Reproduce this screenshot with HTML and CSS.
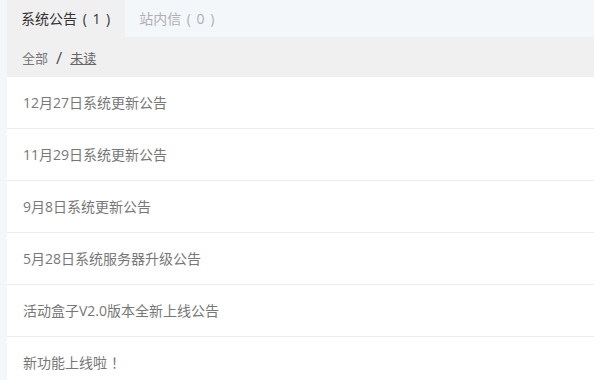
FILE: index.html
```html
<!DOCTYPE html>
<html lang="zh">
<head>
<meta charset="utf-8">
<link rel="stylesheet" href="styles.css">
</head>
<body>
<div class="panel">
  <div class="tabs">
    <div class="tab active">系统公告 ( 1 )</div>
    <div class="tab">站内信 ( 0 )</div>
  </div>
  <div class="filter">
    <span class="f-item">全部</span>
    <span class="sep">/</span>
    <span class="f-item current">未读</span>
  </div>
  <ul class="list">
    <li class="row">12月27日系统更新公告</li>
    <li class="row">11月29日系统更新公告</li>
    <li class="row">9月8日系统更新公告</li>
    <li class="row">5月28日系统服务器升级公告</li>
    <li class="row">活动盒子V2.0版本全新上线公告</li>
    <li class="row">新功能上线啦<span class="bang">！</span></li>
  </ul>
</div>
</body>
</html>
```
FILE: styles.css
```css
html, body {
  margin: 0;
  padding: 0;
}
body {
  background: #f3f7fa;
  font-family: "Open Sans", "Noto Sans CJK SC", sans-serif;
  height: 380px;
  overflow: hidden;
}
.panel {
  margin-left: 7px;
}
.tabs {
  display: flex;
  height: 37px;
}
.tab {
  padding: 0 15px 0 14px;
  line-height: 37px;
  font-size: 14px;
  word-spacing: 2px;
  color: #b0b0b0;
}
.tab.active {
  background: #f0f0f0;
  color: #333;
}
.filter {
  background: #f0f0f0;
  height: 40px;
  display: flex;
  align-items: center;
  padding-left: 15px;
  font-size: 13px;
  color: #777;
}
.sep {
  font-size: 17px;
  margin: 0 8px 0 8px;
  color: #555;
}
.current {
  color: #666;
  text-decoration: underline;
}
.list {
  list-style: none;
  margin: 0;
  padding: 0;
  background: #fff;
}
.row {
  height: 51px;
  line-height: 51px;
  border-bottom: 1px solid #ececec;
  padding-left: 16px;
  font-size: 14px;
  color: #777;
}
.bang {
  margin-left: 4px;
}
```
